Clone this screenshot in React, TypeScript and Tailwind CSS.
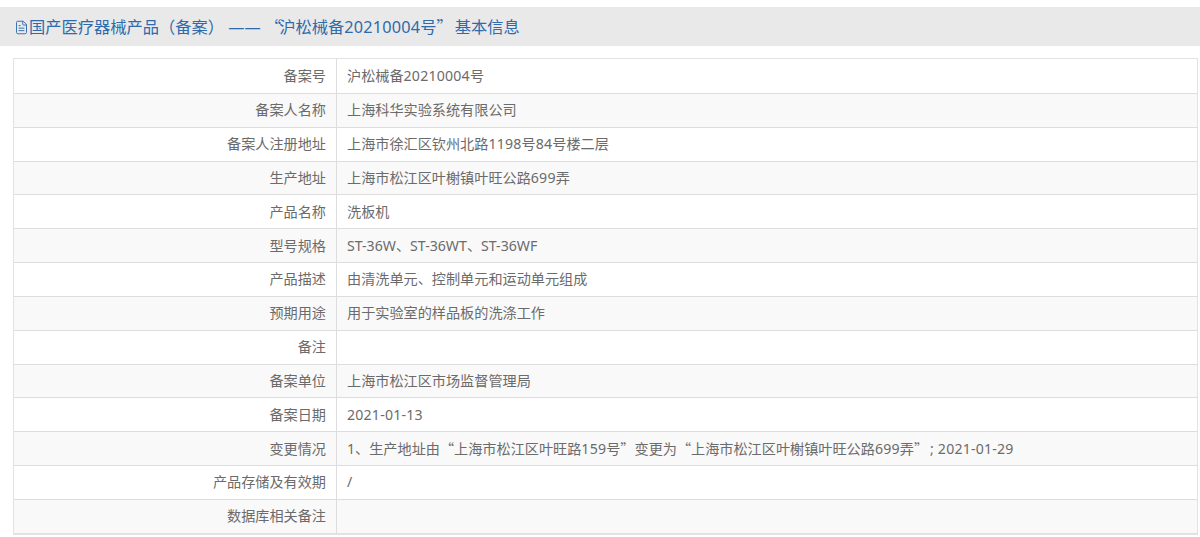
import { FileText } from "lucide-react";

const Q = ({ children }: { children: string }) => (
  <span className="font-['Noto_Sans_CJK_SC',sans-serif]">{children}</span>
);

const N = ({ children }: { children: string }) => <span className="tracking-[0.2px]">{children}</span>;

const rows = [
  ["备案号", <>沪松械备<N>20210004</N>号</>],
  ["备案人名称", <>上海科华实验系统有限公司</>],
  ["备案人注册地址", <>上海市徐汇区钦州北路<N>1198</N>号<N>84</N>号楼二层</>],
  ["生产地址", <>上海市松江区叶榭镇叶旺公路<N>699</N>弄</>],
  ["产品名称", <>洗板机</>],
  ["型号规格", <>ST-36W、ST-36WT、ST-36WF</>],
  ["产品描述", <>由清洗单元、控制单元和运动单元组成</>],
  ["预期用途", <>用于实验室的样品板的洗涤工作</>],
  ["备注", null],
  ["备案单位", <>上海市松江区市场监督管理局</>],
  ["备案日期", <><N>2021-01-13</N></>],
  [
    "变更情况",
    <>
      1、生产地址由<Q>“</Q>上海市松江区叶旺路<N>159</N>号<Q>”</Q>变更为<Q>“</Q>上海市松江区叶榭镇叶旺公路<N>699</N>弄<Q>”</Q>
      <span className="ml-[2px] mr-[4px]">;</span><N>2021-01-29</N>
    </>,
  ],
  ["产品存储及有效期", <>/</>],
  ["数据库相关备注", null],
] as const;

export default function App() {
  return (
    <div className="h-[537px] overflow-hidden bg-white pt-[7px] font-['Noto_Sans','Noto_Sans_CJK_SC',sans-serif] [text-spacing-trim:space-all]">
      <div className="flex h-[39px] items-center bg-[#e9e9e9] pl-[14px] pt-px text-[16.25px] text-[#2f6bab]">
        <FileText className="size-[15px] shrink-0" strokeWidth={1.5} />
        <span className="whitespace-pre">
          国产医疗器械产品（备案） —— <Q>“</Q><span className="-ml-[2px]">沪松械备</span><span className="tracking-[0.2px]">20210004</span>号<Q>”</Q><span className="ml-[2px]">基本信息</span>
        </span>
      </div>
      <div className="ml-[13px] mt-[12px] w-[1185px] border border-b-2 border-[#e2e2e2]">
        {rows.map(([label, value], i) => (
          <div
            key={label}
            className={`flex h-[33.85px] text-[14.15px] text-[#6b6b6b] ${i > 0 ? "border-t border-[#dddddd]" : ""} ${i % 2 === 1 ? "bg-[#f9f9f9]" : "bg-white"}`}
          >
            <div className="flex w-[323px] shrink-0 items-center justify-end border-r border-[#dddddd] pb-px pr-[10px]">
              {label}
            </div>
            <div className="flex items-center whitespace-pre pb-px pl-[10px]">{value}</div>
          </div>
        ))}
      </div>
    </div>
  );
}
